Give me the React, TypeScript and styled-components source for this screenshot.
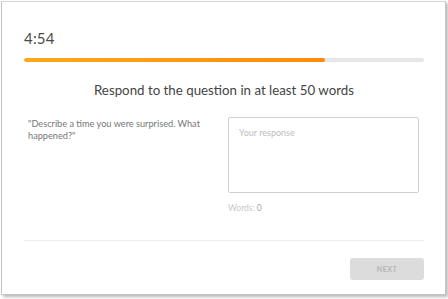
import { createGlobalStyle } from "styled-components";
import styled from "styled-components";

const GlobalStyle = createGlobalStyle`
	html, body {
		margin: 0;
		padding: 0;
		background: #ffffff;
	}
	body {
		font-family: Lato, "Open Sans", sans-serif;
	}
`;

const Page = styled.div`
	padding: 1px 0 0 1px;
	width: 448px;
	height: 299px;
	box-sizing: border-box;
`;

const Card = styled.div`
	width: 445px;
	height: 294px;
	box-sizing: border-box;
	border: 1px solid #c4c4c4;
	border-top-color: #d6d6d6;
	box-shadow: 2px 2px 3px rgba(0, 0, 0, 0.28);
	background: #fff;
	padding: 26px 21px 0 22px;
	display: flex;
	flex-direction: column;
`;

const Timer = styled.div`
	font-size: 15px;
	line-height: 20px;
	color: #4b4b4b;
	letter-spacing: 0.2px;
`;

const Track = styled.div`
	margin-top: 10px;
	height: 4px;
	border-radius: 2px;
	background: #e6e6e6;
	overflow: hidden;
`;

const Fill = styled.div`
	height: 100%;
	border-radius: 2px;
	background: linear-gradient(90deg, #fca81b, #ff8a0c);
`;

const Heading = styled.h1`
	margin: 19px 0 0;
	font-size: 13.3px;
	font-weight: 400;
	line-height: 18px;
	text-align: center;
	color: #444;
`;

const Body = styled.div`
	margin-top: 18px;
	display: grid;
	grid-template-columns: 1fr 191px;
	column-gap: 20px;
	padding: 0 5px 0 4px;
`;

const Prompt = styled.p`
	margin: 0;
	font-size: 9.2px;
	line-height: 12px;
	color: #777;
	padding-top: 1px;
`;

const Answer = styled.div`
	display: flex;
	flex-direction: column;
`;

const Response = styled.textarea`
	box-sizing: border-box;
	width: 191px;
	height: 76px;
	border: 1px solid #d0d0d0;
	border-radius: 2px;
	padding: 9px 10px;
	resize: none;
	font-family: Lato, "Open Sans", sans-serif;
	font-size: 9px;
	color: #555;
	outline: none;

	&::placeholder {
		color: #bdbdbd;
	}
`;

const Count = styled.div`
	margin-top: 10px;
	font-size: 8.5px;
	color: #c8c8c8;

	b {
		font-weight: 400;
		color: #aaa;
	}
`;

const Divider = styled.hr`
	margin: 27px 0 0;
	border: 0;
	border-top: 1px solid #ececec;
`;

const Footer = styled.div`
	display: flex;
	justify-content: flex-end;
	margin-top: 17px;
`;

const NextButton = styled.button`
	width: 74px;
	height: 22px;
	border: 0;
	border-radius: 3px;
	background: #dcdcdc;
	color: #b4b4b4;
	font-family: Lato, "Open Sans", sans-serif;
	font-size: 7px;
	font-weight: 700;
	letter-spacing: 0.6px;
`;

const App = () => {
	const progress = 75.2;

	return (
		<Page>
			<GlobalStyle />
			<Card>
				<Timer>4:54</Timer>
				<Track>
					<Fill style={{ width: `${progress}%` }} />
				</Track>
				<Heading>Respond to the question in at least 50 words</Heading>
				<Body>
					<Prompt>"Describe a time you were surprised. What happened?"</Prompt>
					<Answer>
						<Response placeholder={"Your response"} />
						<Count>
							Words: <b>0</b>
						</Count>
					</Answer>
				</Body>
				<Divider />
				<Footer>
					<NextButton disabled>NEXT</NextButton>
				</Footer>
			</Card>
		</Page>
	);
};

export default App;
